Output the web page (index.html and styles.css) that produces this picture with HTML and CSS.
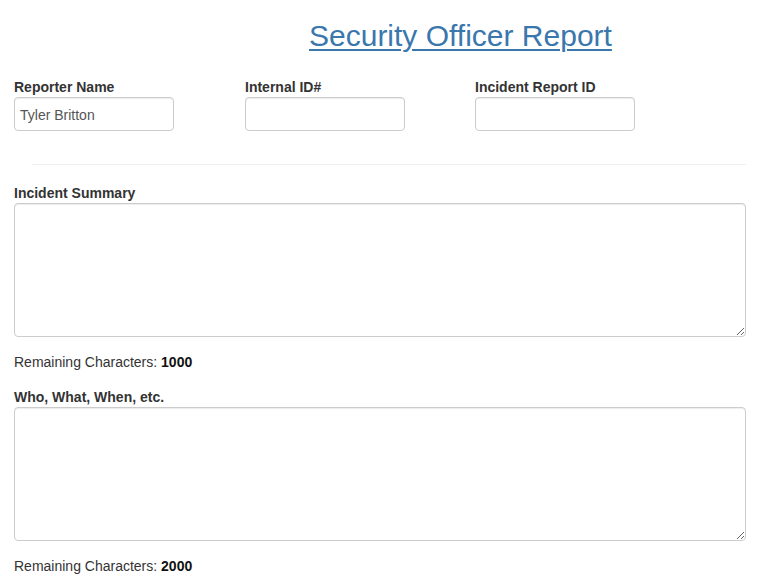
FILE: index.html
```html
<!DOCTYPE html>
<html lang="en">
<head>
<meta charset="utf-8">
<title>Security Officer Report</title>
<link rel="stylesheet" href="styles.css">
</head>
<body>
<div class="page">
  <h1 class="title"><a href="#" class="title-link">Security Officer Report</a></h1>

  <div class="row">
    <div class="field">
      <label class="label" for="reporter">Reporter Name</label>
      <input class="input" id="reporter" type="text" value="Tyler Britton">
    </div>
    <div class="field">
      <label class="label" for="internal">Internal ID#</label>
      <input class="input" id="internal" type="text">
    </div>
    <div class="field">
      <label class="label" for="incident">Incident Report ID</label>
      <input class="input" id="incident" type="text">
    </div>
  </div>

  <hr class="divider">

  <div class="group">
    <label class="label" for="summary">Incident Summary</label>
    <textarea class="area" id="summary"></textarea>
    <p class="remaining">Remaining Characters: <b class="count">1000</b></p>
  </div>

  <div class="group">
    <label class="label" for="details">Who, What, When, etc.</label>
    <textarea class="area" id="details"></textarea>
    <p class="remaining">Remaining Characters: <b class="count">2000</b></p>
  </div>
</div>
</body>
</html>
```

FILE: styles.css
```css
html, body {
  margin: 0;
  padding: 0;
  background: #fff;
}

body {
  font-family: "Liberation Sans", Arial, Helvetica, sans-serif;
  font-size: 14px;
  line-height: 20px;
  color: #333;
}

.page {
  padding: 0 18px 0 14px;
}

.title {
  margin: 19px 0 0 295px;
  font-size: 30px;
  line-height: 33px;
  font-weight: normal;
}

.title-link {
  color: #3a77ad;
  text-decoration: underline;
  text-decoration-thickness: 2px;
  text-underline-offset: 3px;
}

.row {
  display: grid;
  grid-template-columns: 231px 230px 231px;
  margin-top: 25px;
}

.field {
  display: flex;
  flex-direction: column;
  align-items: flex-start;
}

.label {
  display: block;
  font-weight: bold;
  line-height: 20px;
  color: #333;
}

.input {
  box-sizing: border-box;
  width: 160px;
  height: 34px;
  margin: 0;
  padding: 7px 5px 5px;
  font-family: inherit;
  font-size: 14px;
  color: #555;
  background: #fff;
  border: 1px solid #ccc;
  border-radius: 4px;
  box-shadow: inset 0 1px 1px rgba(0, 0, 0, 0.075);
  outline: none;
}

.divider {
  margin: 33px 0 18px 18px;
  border: 0;
  border-top: 1px solid #eee;
  height: 0;
}

.group {
  margin-bottom: 15px;
}

.area {
  display: block;
  box-sizing: border-box;
  width: 732px;
  height: 134px;
  margin: 0;
  padding: 6px 12px;
  font-family: inherit;
  font-size: 14px;
  color: #555;
  background: #fff;
  border: 1px solid #ccc;
  border-radius: 4px;
  box-shadow: inset 0 1px 1px rgba(0, 0, 0, 0.075);
  outline: none;
}

.remaining {
  margin: 15px 0 0;
  line-height: 20px;
  color: #333;
}

.count {
  color: #111;
}
```
